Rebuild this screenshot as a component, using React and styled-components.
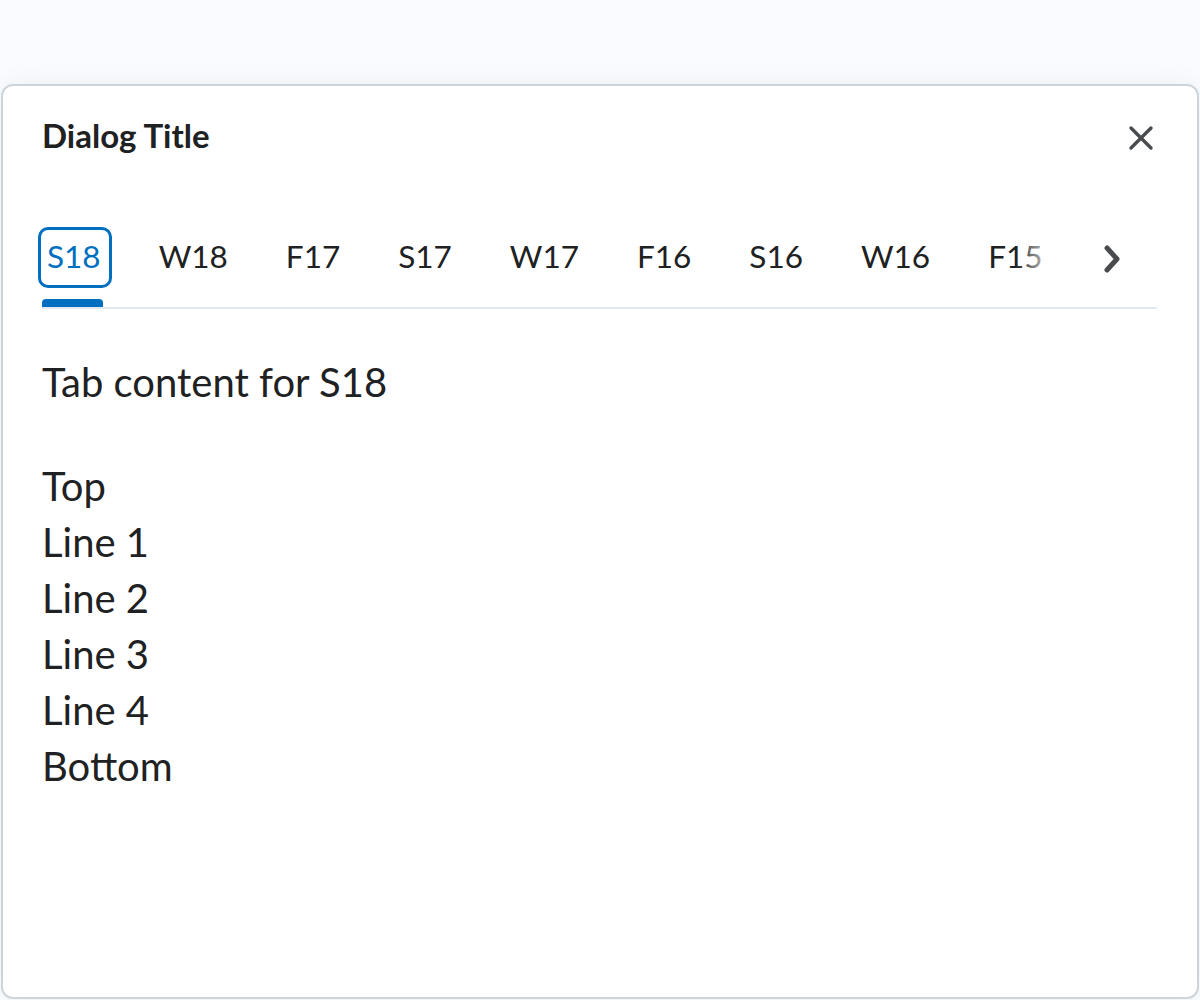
import React from "react"
import styled, { createGlobalStyle } from "styled-components"

const GlobalStyle = createGlobalStyle`
    body {
        margin: 0;
        background: #f9fbff;
        font-family: Lato, "Open Sans", sans-serif;
        color: #202122;
    }
`

const TABS = ["S18", "W18", "F17", "S17", "W17", "F16", "S16", "W16", "F15"]
const LINES = ["Top", "Line 1", "Line 2", "Line 3", "Line 4", "Bottom"]

const Page = styled.div`
    box-sizing: border-box;
    height: 1000px;
    padding: 84px 1px 0 1px;
`

const Dialog = styled.div`
    box-sizing: border-box;
    height: 915px;
    background: #fff;
    border: 2px solid #cdd5dc;
    border-radius: 12px;
    box-shadow: 0 0 28px rgba(0, 0, 0, 0.05);
    padding: 28px 40px 0 39px;
    overflow: hidden;
`

const Header = styled.div`
    display: flex;
    align-items: flex-start;
    justify-content: space-between;
    margin-bottom: 70px;
`

const Title = styled.h2`
    margin: 0;
    font-size: 33px;
    line-height: 43px;
    font-weight: 700;
    color: #202122;
`

const CloseButton = styled.button`
    display: flex;
    padding: 0;
    margin: 11px 3px 0 0;
    border: none;
    background: none;
    color: #494c4e;
    cursor: pointer;
`

const TabBar = styled.div`
    display: flex;
    border-bottom: 2px solid #e3e9f1;
`

const TabViewport = styled.div`
    position: relative;
    flex: 1;
    margin-left: -4px;
    overflow: hidden;

    &::after {
        content: "";
        position: absolute;
        top: 0;
        right: 0;
        bottom: 0;
        width: 42px;
        background: linear-gradient(to right, rgba(255, 255, 255, 0), #fff);
    }
`

const TabList = styled.div`
    display: flex;
    gap: 38px;
    white-space: nowrap;
`

const Tab = styled.div`
    display: flex;
    flex-direction: column;
    flex-shrink: 0;
`

const TabLabel = styled.span`
    font-size: 31.5px;
    line-height: 36px;
    padding: 8px 8px 11px 6px;
    border: 3px solid ${(props) => (props.$selected ? "#006fbf" : "transparent")};
    border-radius: 10px;
    color: ${(props) => (props.$selected ? "#006fbf" : "#202122")};
`

const Indicator = styled.span`
    height: 8px;
    margin: 11px 9px 0 4px;
    border-radius: 4px 4px 0 0;
    background: ${(props) => (props.$selected ? "#006fbf" : "transparent")};
`

const NextButton = styled.button`
    display: flex;
    align-items: flex-start;
    width: 99px;
    padding: 17px 0 0 45px;
    border: none;
    background: none;
    color: #494c4e;
    cursor: pointer;
`

const Panel = styled.div`
    padding-top: 45px;
    font-size: 40px;
    line-height: 56px;
    color: #202122;
`

const Intro = styled.p`
    margin: 0 0 48px;
`

const Line = styled.div``

const CloseIcon = () => (
    <svg width="26" height="26" viewBox="0 0 26 26" fill="none" stroke="currentColor" strokeWidth="3.4" strokeLinecap="round">
        <line x1="3" y1="3" x2="23" y2="23" />
        <line x1="23" y1="3" x2="3" y2="23" />
    </svg>
)

const ChevronIcon = () => (
    <svg width="18" height="30" viewBox="0 0 18 30" fill="none" stroke="currentColor" strokeWidth="5" strokeLinecap="round" strokeLinejoin="round">
        <polyline points="4,4 14,15 4,26" />
    </svg>
)

const App = () => {
    const selected = TABS[0]

    return (
        <Page>
            <GlobalStyle />
            <Dialog>
                <Header>
                    <Title>Dialog Title</Title>
                    <CloseButton aria-label="Close">
                        <CloseIcon />
                    </CloseButton>
                </Header>
                <TabBar>
                    <TabViewport>
                        <TabList>
                            {TABS.map((tab) => (
                                <Tab key={tab}>
                                    <TabLabel $selected={tab === selected}>{tab}</TabLabel>
                                    <Indicator $selected={tab === selected} />
                                </Tab>
                            ))}
                        </TabList>
                    </TabViewport>
                    <NextButton aria-label="Scroll forward">
                        <ChevronIcon />
                    </NextButton>
                </TabBar>
                <Panel>
                    <Intro>Tab content for {selected}</Intro>
                    {LINES.map((line) => (
                        <Line key={line}>{line}</Line>
                    ))}
                </Panel>
            </Dialog>
        </Page>
    )
}

export default App
